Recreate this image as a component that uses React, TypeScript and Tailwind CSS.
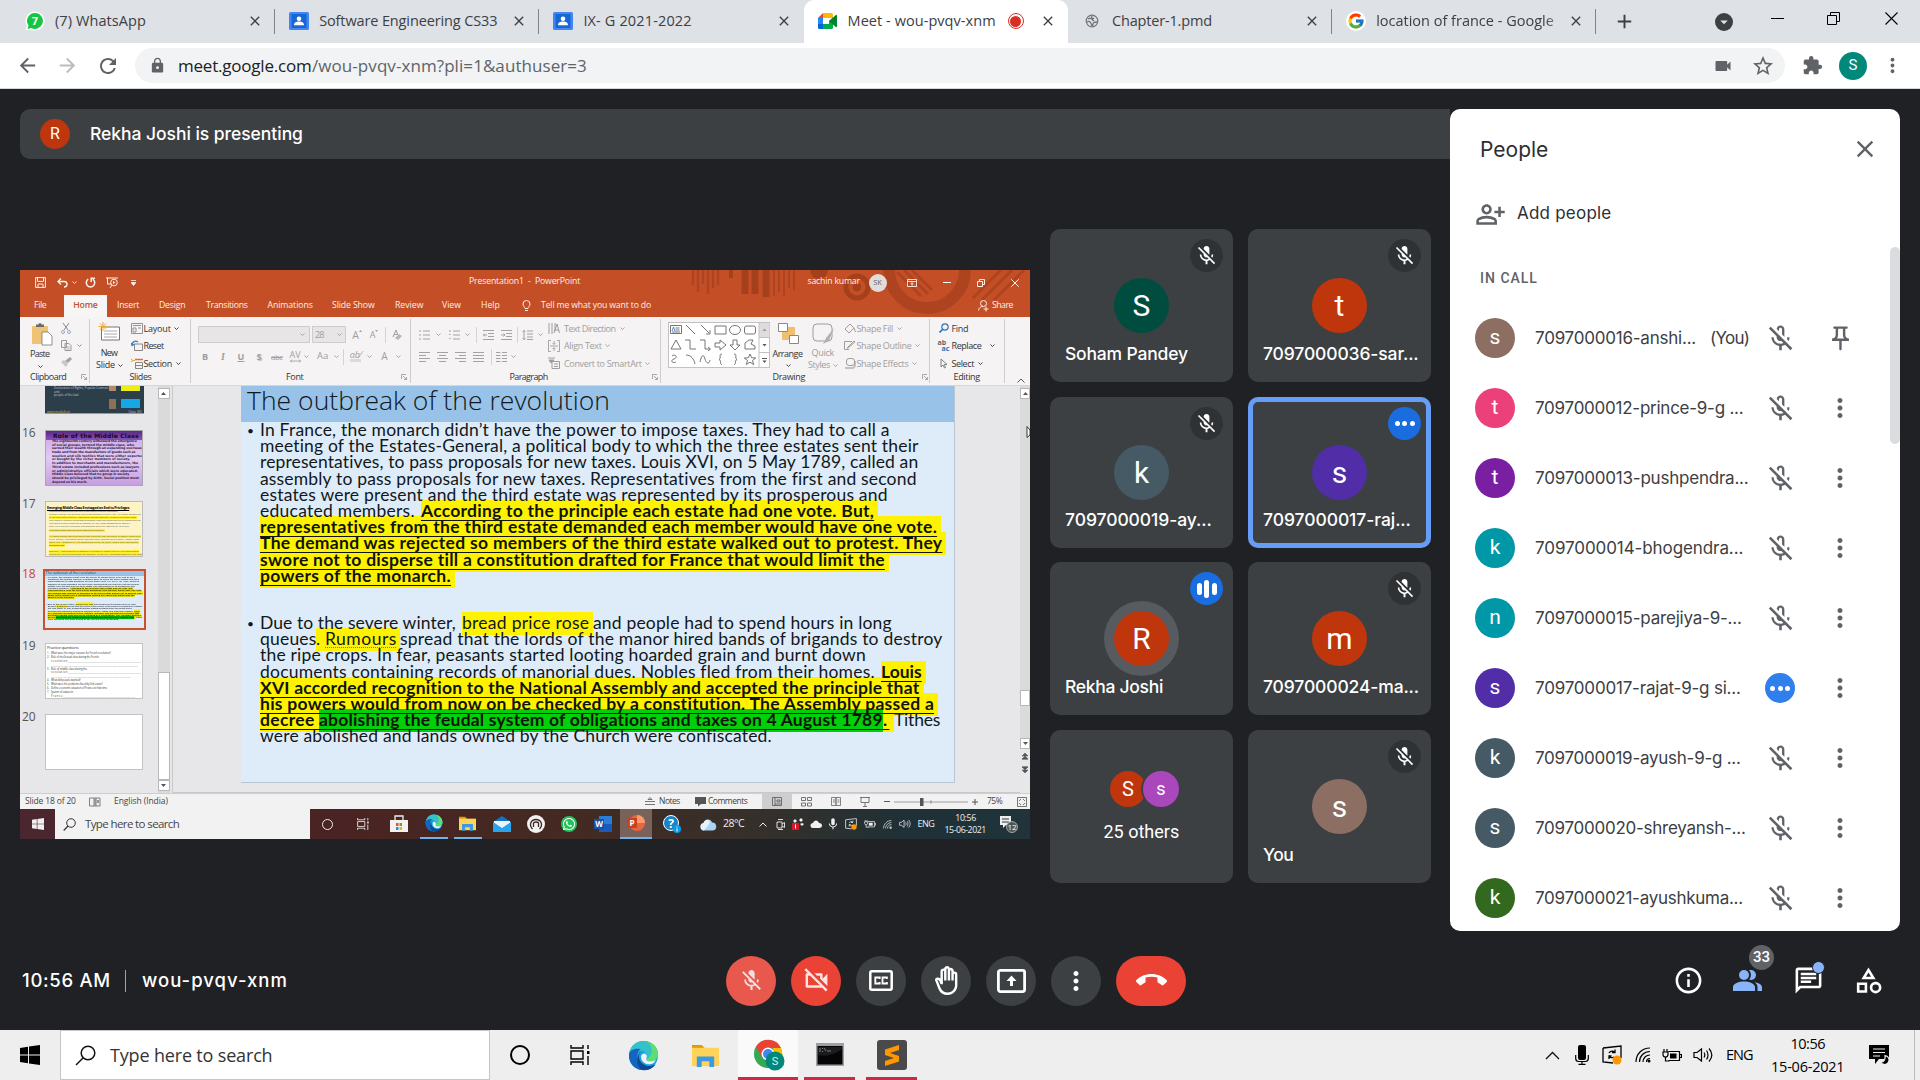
import React, { useLayoutEffect, useRef } from "react";
import {
  MdAdd, MdArrowBack, MdArrowForward, MdRefresh, MdLock, MdVideocam, MdStarOutline, MdExtension,
  MdMoreVert, MdClose, MdMicOff, MdOutlineMicOff, MdOutlineVideocamOff, MdOutlineBackHand,
  MdCallEnd, MdInfoOutline, MdOutlineChat, MdOutlineCategory, MdOutlinePersonAddAlt,
  MdOutlinePushPin, MdMic, MdArrowDropDown,
} from "react-icons/md";
import { FcGoogle } from "react-icons/fc";
import { FaWhatsapp } from "react-icons/fa";

/** Single line of text whose letter spacing is adjusted so that it fills `w` pixels. */
function Fit({ w, children, className = "" }: { w: number; children: string; className?: string }) {
  const ref = useRef<HTMLSpanElement>(null);
  useLayoutEffect(() => {
    const el = ref.current;
    if (!el) return;
    el.style.width = "auto";
    el.style.letterSpacing = "0px";
    const gap = (w - el.offsetWidth) / Math.max(1, children.length - 1);
    el.style.letterSpacing = `${gap}px`;
    el.style.width = `${w}px`;
  }, [w, children]);
  return (
    <span ref={ref} className={`inline-block shrink-0 whitespace-pre ${className}`}>
      {children}
    </span>
  );
}

function Svg({ w, h, vb, className = "", children }: { w: number; h: number; vb?: string; className?: string; children: React.ReactNode }) {
  return (
    <svg width={w} height={h} viewBox={vb ?? `0 0 ${w} ${h}`} fill="none" className={`shrink-0 ${className}`}>
      {children}
    </svg>
  );
}

function Cell({ className = "", children }: { className?: string; children?: React.ReactNode }) {
  return <div className={`flex shrink-0 items-center justify-center ${className}`}>{children}</div>;
}

/* ---------------------------------- Browser ---------------------------------- */

function ContactIcon() {
  return (
    <Svg w={20} h={18}>
      <rect width="20" height="18" rx="1.5" fill="#4285f4" />
      <rect x="2.5" y="2" width="15" height="14" fill="#1967d2" />
      <circle cx="10" cy="6.7" r="2.3" fill="#fff" />
      <path d="M5 13.2c0-2.6 2.3-3.6 5-3.6s5 1 5 3.6z" fill="#fff" />
    </Svg>
  );
}

function MeetIcon() {
  return (
    <Svg w={19} h={16}>
      <path d="M5 0v5H0z" fill="#ea4335" />
      <path d="M0 5h5v6H0z" fill="#2684fc" />
      <path d="M0 11h5v5H1.5A1.5 1.5 0 0 1 0 14.5z" fill="#0066da" />
      <path d="M5 0h8.5A1.5 1.5 0 0 1 15 1.5V5h-4v0H5z" fill="#ffba00" />
      <path d="M5 11h6V8l4-3v9.5a1.5 1.5 0 0 1-1.5 1.500H5z" fill="#00ac47" />
      <path d="M11 8l6.800-6c.5-.4 1.200 0 1.200.5v11c0 .5-.7.9-1.200.5z" fill="#00832d" />
    </Svg>
  );
}

const tabs = [
  { title: "(7) WhatsApp", w: 91, icon: "wa" },
  { title: "Software Engineering CS33", w: 178, icon: "contact" },
  { title: "IX- G 2021-2022", w: 108, icon: "contact" },
  { title: "Meet - wou-pvqv-xnm", w: 148, icon: "meet" },
  { title: "Chapter-1.pmd", w: 100, icon: "globe" },
  { title: "location of france - Google", w: 178, icon: "google" },
];

function TabIcon({ kind }: { kind: string }) {
  if (kind === "wa")
    return (
      <Svg w={20} h={20}>
        <path d="M10 0.500a9.500 9.500 0 1 1-4.700 17.700L.5 19.500l1.300-4.700A9.500 9.500 0 0 1 10 .5z" fill="#fff" />
        <path d="M10 2a8 8 0 1 1-4 15l-3.500 1 1-3.400A8 8 0 0 1 10 2z" fill="#14c643" />
        <text x="10" y="14" fontSize="11" fontWeight="700" fill="#fff" textAnchor="middle" fontFamily="Open Sans">7</text>
      </Svg>
    );
  if (kind === "contact") return <ContactIcon />;
  if (kind === "meet") return <MeetIcon />;
  if (kind === "google")
    return (
      <div className="flex size-5 items-center justify-center rounded-full bg-white">
        <FcGoogle size={18} />
      </div>
    );
  return (
    <Svg w={14} h={14}>
      <circle cx="7" cy="7" r="5.800" stroke="#70757a" strokeWidth="1.200" />
      <path d="M3 5c2-2 4 1 6-1M2 8c3-2 4 1 5 4M8 12c-1-3 1-4 4-4M7 2c-1 2 0 4 2 5" stroke="#70757a" strokeWidth="1.300" />
    </Svg>
  );
}

function TabStrip() {
  return (
    <div className="flex h-[43px] bg-[#dee1e6] pl-[11px] font-['Open_Sans',sans-serif] text-[14.500px] text-[#3c4043]">
      {tabs.map((t, i) => {
        const active = i === 3;
        return (
          <div
            key={t.title}
            className={
              active
                ? "relative flex h-full w-[264.400px] shrink-0 items-center rounded-t-[10px] bg-white px-3 pb-px"
                : "relative flex h-full w-[264.200px] shrink-0 items-center px-3 pb-px"
            }
          >
            <Cell className="w-6"><TabIcon kind={t.icon} /></Cell>
            <div className={i === 5 ? "ml-2 flex-1 overflow-hidden pb-px [mask-image:linear-gradient(to_right,black_88%,transparent)]" : "ml-2 flex-1 overflow-hidden pb-px"}>
              <Fit w={t.w} className="block">{t.title}</Fit>
            </div>
            {active && (
              <div className="mr-4 flex size-4 items-center justify-center rounded-full border-[1.500px] border-[#d93025]">
                <div className="size-[11px] rounded-full bg-[#d93025]" />
              </div>
            )}
            <MdClose size={16} className="shrink-0 text-[#3c4043]" />
            {i !== 3 && i !== 2 && <div className="absolute top-[9px] right-0 h-[25px] w-px bg-[#808488]" />}
          </div>
        );
      })}
      <Cell className="ml-3 h-full w-8 pb-px text-[#3c4043]"><MdAdd size={23} /></Cell>
      <div className="flex-1" />
      <Cell className="h-full w-[50px]">
        <div className="flex size-[18px] items-center justify-center rounded-full bg-[#3c4043] text-[#dee1e6]">
          <MdArrowDropDown size={18} />
        </div>
      </Cell>
      <Cell className="h-[37px] w-[56px]"><div className="h-px w-[13px] bg-black" /></Cell>
      <Cell className="h-[37px] w-[57px]">
        <Svg w={13} h={13}><path d="M.5 3.500h9v9h-9zM3.500 3V.5h9v9H10" stroke="#000" /></Svg>
      </Cell>
      <Cell className="h-[37px] w-[58px]">
        <Svg w={13} h={13}><path d="M.5.5l12 12M12.500.5l-12 12" stroke="#000" strokeWidth="1.100" /></Svg>
      </Cell>
    </div>
  );
}

function AddressBar() {
  return (
    <div className="flex h-[46px] items-center border-b border-[#d5d7da] bg-white pl-[7px] text-[#5f6368]">
      <Cell className="w-10"><MdArrowBack size={23} /></Cell>
      <Cell className="w-10 text-[#babcbe]"><MdArrowForward size={23} /></Cell>
      <Cell className="w-[42px]"><MdRefresh size={24} /></Cell>
      <div className="ml-[6px] flex h-[35px] w-[1650px] shrink-0 items-center rounded-full bg-[#f1f3f4] pl-[14px] font-['Open_Sans',sans-serif] text-[17px]">
        <MdLock size={17} />
        <Fit w={134} className="ml-3 text-[#202124]">meet.google.com</Fit>
        <Fit w={275}>/wou-pvqv-xnm?pli=1&authuser=3</Fit>
        <div className="flex-1" />
        <MdVideocam size={20} />
        <MdStarOutline size={24} className="mr-[10px] ml-[18px]" />
      </div>
      <MdExtension size={21} className="ml-[17px]" />
      <div className="ml-[16px] flex size-7 items-center justify-center rounded-full bg-[#00897b] font-['Roboto',sans-serif] text-[15px] text-white">S</div>
      <MdMoreVert size={23} className="ml-[14px]" />
    </div>
  );
}

/* ----------------------------------- Slide ----------------------------------- */

function Caret({ className = "" }: { className?: string }) {
  return (
    <Svg w={5} h={3} className={className}><path d="M.5.5l2 2 2-2" stroke="currentColor" strokeWidth=".9" /></Svg>
  );
}

type Part = { t: string; w: number; ml?: "s" | "m"; hl?: "y" | "g"; b?: boolean; typo?: boolean };

const para1: Part[][] = [
  [{ t: "In France, the monarch didn’t have the power to impose taxes. They had to call a", w: 630 }],
  [{ t: "meeting of the Estates-General, a political body to which the three estates sent their", w: 659 }],
  [{ t: "representatives, to pass proposals for new taxes. Louis XVI, on 5 May 1789, called an", w: 658 }],
  [{ t: "assembly to pass proposals for new taxes. Representatives from the first and second", w: 656 }],
  [{ t: "estates were present and the third estate was represented by its prosperous and", w: 628 }],
  [
    { t: "educated members.", w: 155 },
    { t: "According to the principle each estate had one vote. But,", w: 453, ml: "m", hl: "y", b: true },
  ],
  [{ t: "representatives from the third estate demanded each member would have one vote.", w: 677, hl: "y", b: true }],
  [{ t: "The demand was rejected so members of the third estate walked out to protest. They", w: 682, hl: "y", b: true }],
  [{ t: "swore not to disperse till a constitution drafted for France that would limit the", w: 625, hl: "y", b: true }],
  [{ t: "powers of the monarch.", w: 191, hl: "y", b: true }],
];

const para2: Part[][] = [
  [
    { t: "Due to the severe winter,", w: 196 },
    { t: "bread price rose", w: 127, ml: "m", hl: "y" },
    { t: "and people had to spend hours in long", w: 299, ml: "s" },
  ],
  [
    { t: "queues", w: 56 },
    { t: ". ", w: 9, hl: "y" },
    { t: "Rumours", w: 71, hl: "y", typo: true },
    { t: "spread that the lords of the manor hired bands of brigands to destroy", w: 542, ml: "s" },
  ],
  [{ t: "the ripe crops. In fear, peasants started looting hoarded grain and burnt down", w: 606 }],
  [
    { t: "documents containing records of manorial dues. Nobles fled from their homes.", w: 615 },
    { t: "Louis", w: 41, ml: "m", hl: "y", b: true },
  ],
  [{ t: "XVI accorded recognition to the National Assembly and accepted the principle that", w: 660, hl: "y", b: true }],
  [{ t: "his powers would from now on be checked by a constitution. The Assembly passed a", w: 674, hl: "y", b: true }],
  [
    { t: "decree ", w: 59, hl: "y", b: true },
    { t: "abolishing the feudal system of obligations and taxes on 4 August 1789", w: 564, hl: "g", b: true },
    { t: ". ", w: 7, hl: "y", b: true },
    { t: "Tithes", w: 46, ml: "s" },
  ],
  [{ t: "were abolished and lands owned by the Church were confiscated.", w: 511 }],
];

function SlideLine({ parts }: { parts: Part[] }) {
  return (
    <div className="flex h-[16.200px] items-center">
      {parts.map((p, i) => (
        <span key={i} className={p.ml === "m" ? "relative ml-[6px]" : p.ml === "s" ? "relative ml-[4px]" : "relative"}>
          {p.hl === "y" && <span className="absolute -top-[1px] -right-[4px] bottom-[-2px] left-0 -z-10 bg-[#fff200]" />}
          {p.hl === "g" && <span className="absolute -top-[1px] right-0 bottom-[-2px] left-0 -z-10 bg-[#00cf0a]" />}
          <Fit
            w={p.w}
            className={
              p.b
                ? "font-bold text-[#101408] underline decoration-[1.300px] underline-offset-[2.500px] [text-decoration-skip-ink:none]"
                : p.typo
                  ? "underline decoration-[#e8502a] decoration-dotted decoration-1 underline-offset-[2px] [text-decoration-skip-ink:none]"
                  : ""
            }
          >
            {p.t}
          </Fit>
        </span>
      ))}
    </div>
  );
}

function Slide() {
  return (
    <div className="isolate h-[396px] w-[713px] bg-[#deebf8] font-['Lato',sans-serif] text-[17.500px] leading-[20px] text-[#101820]">
      <div className="relative -z-20 flex h-[36px] items-center bg-[#98c2e8] pb-[9px] pl-[6px]">
        <Fit w={363} className="font-['Open_Sans',sans-serif] text-[26.500px] font-light">The outbreak of the revolution</Fit>
      </div>
      <div className="flex">
        <div className="w-[19px] pl-[6px] text-[12px] leading-[18px]">•</div>
        <div>{para1.map((l, i) => <SlideLine key={i} parts={l} />)}</div>
      </div>
      <div className="mt-[31px] flex">
        <div className="w-[19px] pl-[6px] text-[12px] leading-[18px]">•</div>
        <div>{para2.map((l, i) => <SlideLine key={i} parts={l} />)}</div>
      </div>
    </div>
  );
}

/* --------------------------------- PowerPoint --------------------------------- */

const menu: [string, number, string][] = [
  ["Insert", 22, "ml-[10px]"],
  ["Design", 27, "ml-[20px]"],
  ["Transitions", 42, "ml-[20px]"],
  ["Animations", 45.5, "ml-[19.500px]"],
  ["Slide Show", 43, "ml-[19px]"],
  ["Review", 28, "ml-[20px]"],
  ["View", 19, "ml-[19px]"],
  ["Help", 19, "ml-[20px]"],
];

function PptHeader() {
  return (
    <div className="relative h-[47px] overflow-hidden bg-[#c44f26] text-[8.700px] text-[#fdeee8]">
      <svg className="absolute inset-0" width="1010" height="47" fill="none" stroke="#a5401c">
        <path d="M673 0v15M678 0v22M683 0v14M688 0v24M693 0v18M698 0v15" strokeWidth="2.500" opacity=".7" />
        <path d="M711 0v8" strokeWidth="4" />
        <path d="M725 0v24M735 0v24M746 0v27" strokeWidth="7" />
        <path d="M754 0v26M759 0v22M764 0v26M769 0v18M774 0v20" strokeWidth="2" opacity=".7" />
        <path d="M790 0a9 9 0 0 0 18 0z" fill="#a5401c" stroke="none" />
        <circle cx="837" cy="17" r="11" strokeWidth="5" />
        <circle cx="837" cy="17" r="4" fill="#a5401c" />
        <circle cx="907" cy="0" r="38" strokeWidth="12" opacity=".7" />
        <path d="M877 2l24 24M884 0l24 24M892 0l20 20M953 28l28-28M962 30l30-30M974 30l30-30" strokeWidth="3" opacity=".7" />
      </svg>
      <div className="relative flex h-[25px] items-center">
        <Cell className="ml-[13px] w-[14px]">
          <Svg w={11} h={11}><path d="M.6.6h9.800v9.800H.6zM2.500.6v3.800h6V.6M3 10.400V7h5v3.400" stroke="currentColor" /></Svg>
        </Cell>
        <Cell className="ml-[8px] w-[14px]">
          <Svg w={11} h={10}><path d="M4 .5L1 3.500l3 3M1.500 3.500H7c4 0 4 5.500 0 5.500" stroke="currentColor" strokeWidth="1.400" /></Svg>
        </Cell>
        <Cell className="w-[10px]"><Caret /></Cell>
        <Cell className="ml-[4px] w-[14px]">
          <Svg w={11} h={11}><path d="M3.200 2.200a4.200 4.200 0 1 0 4.600 0M6.200 5V1.200H10" stroke="currentColor" strokeWidth="1.500" /></Svg>
        </Cell>
        <Cell className="ml-[8px] w-[14px]">
          <Svg w={13} h={12}><path d="M0 1h12M1.500 1v6H5M4 11l2-3" stroke="currentColor" /><circle cx="8" cy="5.500" r="3.300" stroke="currentColor" /><path d="M7 4l2.500 1.500L7 7z" fill="currentColor" /></Svg>
        </Cell>
        <Cell className="ml-[10px] w-[8px]"><Svg w={5} h={6}><path d="M0 .5h5M0 2.500h5L2.500 5.500z" stroke="currentColor" strokeWidth=".8" fill="currentColor" /></Svg></Cell>
        <Fit w={111} className="ml-[332px] pb-px">Presentation1  -  PowerPoint</Fit>
        <Fit w={53} className="ml-[227.500px] pb-px">sachin kumar</Fit>
        <Cell className="ml-[8px] size-[18px] rounded-full bg-[#e2ddda] text-[7.500px] text-[#666]">SK</Cell>
        <Cell className="ml-[17px] w-[16px]"><Svg w={10} h={8}><path d="M.5.5h9v7h-9zM.5 2.500h9M5 7V4M3.500 5L5 3.700 6.500 5" stroke="currentColor" strokeWidth=".9" /></Svg></Cell>
        <Cell className="ml-[19px] w-[16px]"><div className="h-px w-[8px] bg-white" /></Cell>
        <Cell className="ml-[18px] w-[16px]"><Svg w={8} h={8}><path d="M.5 2.500h5v5h-5zM2.500 2V.5h5v5H6" stroke="currentColor" /></Svg></Cell>
        <Cell className="ml-[18px] w-[16px]"><Svg w={8} h={8}><path d="M.3.3l7.400 7.400M7.700.3L.3 7.700" stroke="currentColor" /></Svg></Cell>
      </div>
      <div className="relative flex h-[22px] items-center">
        <Fit w={13} className="ml-[14px]">File</Fit>
        <Cell className="ml-[17px] h-full w-[43px] bg-[#f8f6f5] text-[#c4502a]"><Fit w={24.5} className="font-semibold">Home</Fit></Cell>
        {menu.map(([t, w, ml]) => <Fit key={t} w={w} className={ml}>{t}</Fit>)}
        <Cell className="ml-[21px] w-[10px]"><Svg w={9} h={12}><path d="M3 8.500C3 7 1 6.500 1 4a3.500 3.500 0 0 1 7 0c0 2.500-2 3-2 4.500zM3 10.500h3" stroke="currentColor" /></Svg></Cell>
        <Fit w={110} className="ml-[10px]">Tell me what you want to do</Fit>
        <Svg w={11} h={12} className="ml-[327px]"><circle cx="5.500" cy="3.500" r="3" stroke="currentColor" /><path d="M.5 10.500C1 7.500 3 6.500 5 6.500M8 6.500v5M5.500 9h5" stroke="currentColor" /></Svg>
        <Fit w={21} className="ml-[3px]">Share</Fit>
      </div>
    </div>
  );
}

function GroupLabel({ children, launcher, className }: { children: React.ReactNode; launcher?: string; className: string }) {
  return (
    <div className={`flex h-[13px] items-center ${className}`}>
      {children}
      {launcher && (
        <Svg w={6} h={6} className={launcher}><path d="M.5 5V.5H5M2 2l3.500 3.500M5.500 3v2.500H3" stroke="#888" strokeWidth=".7" /></Svg>
      )}
    </div>
  );
}

function VSep() {
  return <div className="h-[16px] w-px bg-[#d6d4d3]" />;
}

function Lines({ kind }: { kind: string }) {
  const d: Record<string, string> = {
    left: "M0 .5h11M0 3.500h7M0 6.500h11M0 9.500h7",
    center: "M0 .5h11M2 3.500h7M0 6.500h11M2 9.500h7",
    right: "M0 .5h11M4 3.500h7M0 6.500h11M4 9.500h7",
    just: "M0 .5h11M0 3.500h11M0 6.500h11M0 9.500h11",
    cols: "M0 .5h4.500M6 .5H11M0 3.500h4.500M6 3.500H11M0 6.500h4.500M6 6.500H11M0 9.500h4.500M6 9.500H11",
    bullets: "M0 1h2M4 1h7M0 5h2M4 5h7M0 9h2M4 9h7",
    numbers: "M1 0v2M0 4.500h1.500M0 8.500h1.500M4 1h7M4 5h7M4 9h7",
    outdent: "M0 .5h11M5 3.500h6M5 6.500h6M0 9.500h11M4 5H0M2 3.500L.5 5 2 6.500",
    indent: "M0 .5h11M5 3.500h6M5 6.500h6M0 9.500h11M0 5h4M2.500 3.500L4 5 2.500 6.500",
    spacing: "M5 1h6M5 4h6M5 7h6M5 9.500h6M2 0v10M.5 2L2 .5 3.500 2M.5 8L2 9.500 3.500 8",
  };
  return <Svg w={11} h={10}><path d={d[kind]} stroke="#a5a3a2" /></Svg>;
}

function RibbonRow({ icon, label, w, caret, iconCell = "w-[17px]" }: { icon: React.ReactNode; label: string; w: number; caret?: string; iconCell?: string }) {
  return (
    <div className="flex h-[17.500px] items-center pt-px">
      <Cell className={iconCell}>{icon}</Cell>
      <Fit w={w}>{label}</Fit>
      {caret && <Caret className={caret} />}
    </div>
  );
}

function Ribbon() {
  return (
    <div className="flex h-[69px] border-b border-[#d8d6d5] bg-[#f5f3f3] text-[9px] text-[#333]">
      {/* Clipboard */}
      <div className="my-[2px] w-[69.500px] shrink-0 border-r border-[#cfcdcc]">
        <div className="flex h-[54px]">
          <div className="flex w-[40px] flex-col items-center pt-[3px]">
            <Svg w={22} h={24} className="ml-[4px]">
              <path d="M1 4h16v18H1z" fill="#eec376" />
              <path d="M5 5V2.500h2.500a1.500 1.500 0 0 1 3 0H13V5z" fill="#6a6a6a" />
              <path d="M11 10h6l4 4v9H11z" fill="#fff" stroke="#777" strokeWidth=".8" />
            </Svg>
            <Fit w={20} className="leading-[16px]">Paste</Fit>
            <Caret className="mt-[3px]" />
          </div>
          <div className="pl-[1px] text-[#888]">
            <Cell className="h-[18px] w-[10px]"><Svg w={10} h={11}><path d="M2 0l5 7M8 0L3 7" stroke="#8b8b8b" /><circle cx="2" cy="9" r="1.500" stroke="#9aabc8" /><circle cx="8" cy="9" r="1.500" stroke="#9aabc8" /></Svg></Cell>
            <div className="flex h-[17px] items-center">
              <Svg w={11} h={11}><path d="M.5.5h5v7h-5zM4 3.500h4l2 2v5H4z" stroke="#9a9a9a" fill="#f5f3f3" /><path d="M5.500 7h3M5.500 9h3" stroke="#9a9a9a" strokeWidth=".7" /></Svg>
              <Caret className="ml-[5px]" />
            </div>
            <Cell className="h-[16px] w-[10px]"><Svg w={11} h={10}><path d="M0 5l3-2 4 4-2 3z" fill="#c9c5c2" /><path d="M4 4l5-4 2 2-4 4z" fill="#a3a1a0" /></Svg></Cell>
          </div>
        </div>
        <GroupLabel className="-mt-[3px] pl-[10px]" launcher="ml-[14px]"><Fit w={37}>Clipboard</Fit></GroupLabel>
      </div>
      {/* Slides */}
      <div className="my-[2px] w-[101.500px] shrink-0 border-r border-[#cfcdcc]">
        <div className="flex h-[54px]">
          <div className="flex w-[40px] flex-col items-center pt-[3px]">
            <Svg w={23} h={20}>
              <path d="M3.500 5h18v13h-18z" fill="#fff" stroke="#777" />
              <path d="M6 9h13M6 12h13M6 15h13" stroke="#aaa" />
              <path d="M5 0v9M.5 4.500h9M2 1.500l6 6M8 1.500l-6 6" stroke="#eca93c" />
            </Svg>
            <Fit w={17.5} className="mt-[5px] leading-[12px]">New</Fit>
            <div className="flex items-center leading-[12px]"><Fit w={19}>Slide</Fit><Caret className="ml-[3px]" /></div>
          </div>
          <div>
            <RibbonRow iconCell="w-[14px]" label="Layout" w={27} caret="ml-[3px]" icon={<Svg w={12} h={11}><path d="M.5.5h11v10H.5zM2 2.500h8M2 5h3v4H2zM7 5h3" stroke="#888" strokeWidth=".9" /></Svg>} />
            <RibbonRow iconCell="w-[14px]" label="Reset" w={20.5} icon={<Svg w={12} h={11}><path d="M3.500 4h8v6.500h-8z" stroke="#888" /><path d="M1 5c0-3 3-5 6-3M0 3l1 2.500L3.500 4" stroke="#3b7fc4" strokeWidth="1.200" /></Svg>} />
            <RibbonRow iconCell="w-[14px]" label="Section" w={29} caret="ml-[3px]" icon={<Svg w={12} h={11}><path d="M4 1.500h8" stroke="#d9742b" strokeWidth="1.500" /><path d="M4.500 4.500h7v6h-7zM4.500 7.500h7" stroke="#888" /><path d="M0 1l2 1.500L0 4M1 2.500h3" stroke="#eca93c" /></Svg>} />
          </div>
        </div>
        <GroupLabel className="-mt-[3px] pl-[40px]"><Fit w={22}>Slides</Fit></GroupLabel>
      </div>
      {/* Font */}
      <div className="my-[2px] w-[219.500px] shrink-0 border-r border-[#cfcdcc]">
        <div className="h-[54px] pt-[6px] text-[#a09e9d]">
          <div className="flex h-[19px] items-center pl-[7px]">
            <div className="flex h-[17px] w-[112px] items-center justify-end border border-[#cfcdcc] bg-[#e7e5e5] pr-[4px]"><Caret /></div>
            <div className="ml-[2px] flex h-[17px] w-[34px] items-center justify-between border border-[#cfcdcc] bg-[#e7e5e5] pr-[3px] pl-[2px]"><Fit w={9}>28</Fit><Caret /></div>
            <Cell className="w-[22px] text-[10.500px] leading-[12px]">A<Svg w={3} h={2} className="mb-[8px]"><path d="M0 2h3L1.500 0z" fill="currentColor" /></Svg></Cell>
            <Cell className="w-[12px] text-[9px] leading-[12px]">A<Svg w={3} h={2} className="mb-[8px]"><path d="M0 0h3L1.500 2z" fill="currentColor" /></Svg></Cell>
            <Cell className="w-[11px]"><VSep /></Cell>
            <Cell className="w-[13px]"><Svg w={11} h={12}><path d="M1 8L4 1l2 5M2 5.500h3" stroke="currentColor" /><path d="M3 9l4-4 3 2-4 4z" fill="#b9b7b6" /></Svg></Cell>
          </div>
          <div className="flex h-[25px] items-center pl-[5px]">
            <Cell className="w-[18px] font-bold">B</Cell>
            <Cell className="w-[18px] font-['Liberation_Serif',serif] text-[10px] font-bold italic">I</Cell>
            <Cell className="w-[18px] font-bold underline">U</Cell>
            <Cell className="w-[18px] font-bold [text-shadow:1px_1px_1px_#bbb]">S</Cell>
            <Cell className="w-[18px]"><Fit w={12} className="text-[8px] line-through">abc</Fit></Cell>
            <Cell className="w-[18px] flex-col leading-[8px]"><Fit w={11}>AV</Fit><Svg w={11} h={4}><path d="M0 2h11M2 .5L.5 2 2 3.500M9 .5L10.500 2 9 3.500" stroke="currentColor" strokeWidth=".8" /></Svg></Cell>
            <Cell className="w-[5px]"><Caret /></Cell>
            <Cell className="ml-[2px] w-[23px]"><Fit w={11} className="text-[9.500px]">Aa</Fit></Cell>
            <Cell className="w-[5px]"><Caret /></Cell>
            <Cell className="w-[9px]"><VSep /></Cell>
            <Cell className="w-[15px] flex-col leading-[8px]"><span className="italic">ab⁄</span><div className="h-[3px] w-[11px] bg-[#dddbda]" /></Cell>
            <Cell className="w-[13px]"><Caret /></Cell>
            <Cell className="w-[17px] text-[10px]">A</Cell>
            <Cell className="w-[10px]"><Caret /></Cell>
          </div>
        </div>
        <GroupLabel className="-mt-[3px] pl-[95px]" launcher="ml-[97px]"><Fit w={18}>Font</Fit></GroupLabel>
      </div>
      {/* Paragraph */}
      <div className="my-[2px] w-[250px] shrink-0 border-r border-[#cfcdcc]">
        <div className="flex h-[54px] text-[#a09e9d]">
          <div className="w-[133px] pt-[6px]">
            <div className="flex h-[19px] items-center pl-[3px]">
              <Cell className="w-[21px]"><Lines kind="bullets" /></Cell>
              <Cell className="w-[7px]"><Caret /></Cell>
              <Cell className="ml-[2px] w-[21px]"><Lines kind="numbers" /></Cell>
              <Cell className="w-[5px]"><Caret /></Cell>
              <Cell className="w-[13px]"><VSep /></Cell>
              <Cell className="w-[11px]"><Lines kind="outdent" /></Cell>
              <Cell className="ml-[3px] w-[19px]"><Lines kind="indent" /></Cell>
              <Cell className="w-[3px]"><VSep /></Cell>
              <Cell className="w-[18px]"><Lines kind="spacing" /></Cell>
              <Cell className="w-[7px]"><Caret /></Cell>
            </div>
            <div className="flex h-[25px] items-center pl-[5px]">
              <Cell className="w-[18px]"><Lines kind="left" /></Cell>
              <Cell className="w-[18px]"><Lines kind="center" /></Cell>
              <Cell className="w-[18px]"><Lines kind="right" /></Cell>
              <Cell className="w-[18px]"><Lines kind="just" /></Cell>
              <Cell className="w-[7px]"><VSep /></Cell>
              <Cell className="w-[13px]"><Lines kind="cols" /></Cell>
              <Cell className="w-[11px]"><Caret /></Cell>
            </div>
          </div>
          <div>
            <RibbonRow iconCell="w-[20.500px]" label="Text Direction" w={52.5} caret="ml-[3px]" icon={<Svg w={12} h={11}><path d="M1 0v11M4 0v11M7 0v8M6 10L9 1l2.500 9M7 7h4" stroke="currentColor" /></Svg>} />
            <RibbonRow iconCell="w-[20.500px]" label="Align Text" w={38} caret="ml-[3px]" icon={<Svg w={12} h={12}><path d="M3 .5H.5v11H3M9 .5h2.500v11H9M2 6h8M6 1v3M6 11V8M4.500 3L6 4.500 7.500 3M4.500 9L6 7.500 7.500 9" stroke="currentColor" strokeWidth=".9" /></Svg>} />
            <RibbonRow iconCell="w-[20.500px]" label="Convert to SmartArt" w={78} caret="ml-[3px]" icon={<Svg w={12} h={12}><path d="M0 1h7M1 3h5l-3 3z" stroke="currentColor" fill="currentColor" /><path d="M4 4.500h7.500v7H4zM6 7h4M6 9.500h4" stroke="currentColor" /></Svg>} />
          </div>
        </div>
        <GroupLabel className="-mt-[3px] pl-[99px]" launcher="ml-[103px]"><Fit w={39}>Paragraph</Fit></GroupLabel>
      </div>
      {/* Drawing */}
      <div className="my-[2px] w-[269px] shrink-0 border-r border-[#cfcdcc]">
        <div className="flex h-[54px]">
          <Svg w={102} h={46} className="mt-[3px] ml-[7px]">
            <rect x=".5" y=".5" width="101" height="45" fill="#fff" stroke="#c4c2c1" />
            <rect x="91" y="1" width="10.500" height="14" fill="#dedcdc" />
            <path d="M91 0v46M91 15.500h11M91 30.500h11" stroke="#c4c2c1" />
            <path d="M94.500 9l2-2.500 2 2.500z" fill="#999" />
            <path d="M94.500 22l2 2.500 2-2.500zM94.500 38.500l2 2.500 2-2.500z" fill="#555" />
            <path d="M94 36.500h5" stroke="#555" />
            <g stroke="#666" strokeWidth=".9">
              <path d="M2.500 3.500h11v8h-11zM7.500 6h4M7.500 8h4M4 10h8" />
              <path d="M4 9l1.500-4L7 9" stroke="#3b7fc4" />
              <path d="M18 3l9 9M33 3l8 8M42 8v4h-4M47 4h11v8H47z" />
              <ellipse cx="67" cy="8" rx="5.500" ry="4.500" />
              <rect x="76.500" y="4" width="11" height="8" rx="2" />
              <path d="M3 27l5-9 5 9zM17 18h5v9h6M32 18h5v9h5M40 25l2.500 2-2.500 2M47 21h5v-3l6 5-6 5v-3h-5zM65 18h4v5h3l-5 5-5-5h3zM77 27v-6l4-3h4l-2 4 4 2v3z" />
              <path d="M4 34c4-3 6 2 2 3s-2 5 2 3M18 33c5 0 8 4 9 9M32 40c2-9 4-7 5-3s4 6 5 1M54 32c-4 0 0 4-3 5.500 3 1 0 5 3 5M66 32c4 0 0 4 3 5.500-3 1 0 5-3 5M82 32l1.700 3.800 4 .2-3.200 2.500 1.200 4-3.700-2.300-3.700 2.300 1.200-4-3.200-2.500 4-.2z" />
            </g>
          </Svg>
          <div className="ml-[3px] flex w-[31px] flex-col items-center pt-[4px]">
            <Svg w={21} h={21}><path d="M9 4h8v8h-8zM4 9h8v8H4z" fill="#f0c070" /><path d="M.5.5h9v8h-9zM11.500 12.500h9v8h-9z" fill="#fff" stroke="#888" /></Svg>
            <Fit w={31} className="mt-[3px] leading-[14px]">Arrange</Fit>
            <Caret className="mt-[3px]" />
          </div>
          <div className="ml-[2px] flex w-[35px] flex-col items-center pt-[4px] text-[#a09e9d]">
            <Svg w={23} h={22}><rect x="1" y="1" width="19" height="17" rx="4" stroke="currentColor" /><path d="M22 5l-8 10-3 6 6-3z" fill="#b5b3b2" /></Svg>
            <Fit w={23} className="mt-[2px] leading-[12px]">Quick</Fit>
            <div className="flex items-center leading-[12px]"><Fit w={22}>Styles</Fit><Caret className="ml-[3px]" /></div>
          </div>
          <div className="pl-[2px] text-[#a09e9d]">
            <RibbonRow iconCell="w-[14px]" label="Shape Fill" w={37} caret="ml-[3px]" icon={<Svg w={12} h={11}><path d="M1 6l5-5 4 4-5 5zM10 5l1.500 4" stroke="currentColor" /></Svg>} />
            <RibbonRow iconCell="w-[14px]" label="Shape Outline" w={55} caret="ml-[3px]" icon={<Svg w={12} h={11}><path d="M8 1.500H.5v8H5M3 8l7-7 1 1-7 6z" stroke="currentColor" /></Svg>} />
            <RibbonRow iconCell="w-[14px]" label="Shape Effects" w={52} caret="ml-[3px]" icon={<Svg w={12} h={11}><path d="M1 10h8l2-2V3" stroke="#c4c2c1" strokeWidth="2" /><rect x="2.500" y=".5" width="8" height="7" rx="2.500" stroke="currentColor" /></Svg>} />
          </div>
        </div>
        <GroupLabel className="-mt-[3px] pl-[112px]" launcher="ml-[116px]"><Fit w={33}>Drawing</Fit></GroupLabel>
      </div>
      {/* Editing */}
      <div className="my-[2px] w-[75px] shrink-0 border-r border-[#cfcdcc]">
        <div className="h-[54px] pl-[6px]">
          <RibbonRow iconCell="w-[16px]" label="Find" w={17} icon={<Svg w={10} h={10}><circle cx="6" cy="4" r="3.200" stroke="#2f72b8" strokeWidth="1.200" /><path d="M4 6L.5 9.500" stroke="#2f72b8" strokeWidth="1.600" /></Svg>} />
          <RibbonRow iconCell="w-[16px]" label="Replace" w={30.5} caret="ml-[8px]" icon={<div className="text-[7px] leading-[6px] font-bold"><div className="text-[#666]">ab</div><div className="pl-1 text-[#2f72b8]">ac</div></div>} />
          <RibbonRow iconCell="w-[16px]" label="Select" w={23} caret="ml-[3px]" icon={<Svg w={8} h={11}><path d="M1 1v8l2-2 1.500 3 1-.5L4.300 6.500H7z" stroke="#777" strokeWidth=".9" /></Svg>} />
        </div>
        <GroupLabel className="-mt-[3px] pl-[24px]"><Fit w={27}>Editing</Fit></GroupLabel>
      </div>
      <div className="flex flex-1 items-end justify-center pb-[2px] pl-[8px]">
        <Svg w={8} h={5}><path d="M.5 4.500L4 1l3.500 3.500" stroke="#555" /></Svg>
      </div>
    </div>
  );
}

const middle = [
  "The eighteenth century witnessed the emergence",
  "of social groups, termed the middle class, who",
  "earned their wealth through an expanding overseas",
  "trade and from the manufacture of goods such as",
  "woollen and silk textiles that were either exported",
  "or bought by the richer members of society.",
  "In addition to merchants and manufacturers, the",
  "Third estate included professions such as lawyers",
  "or administrative officials which were educated.",
  "Middle Class believed that no group in society",
  "should be privileged by birth. Social position must",
  "depend on his merit.",
];
const middleW = [85, 82, 90, 83, 91, 78, 86, 87, 86, 77, 87, 35];

const privileges: [string, number, boolean][] = [
  ["Peasants and workers participated in revolts against taxes and food scarcity.", 70, false],
  ["Groups lacked the means and programmes to carry out full-scale measures", 92, false],
  ["In the eighteenth century, new social groups emerged, termed the middle class,", 88, true],
  ["their wealth through expanding overseas trade and manufacture of goods such as", 92, false],
  ["that were either exported or bought by the richer members of society.", 82, false],
  ["The third estate included professions such as lawyers or officials.", 80, false],
  ["a person’s social position must depend on his merit.", 56, true],
  [" ", 10, false],
  ["All these groups were educated and believed that no group in society should be", 92, true],
  ["birth. Rather, a person’s social position must depend on his merit. These ideas", 90, false],
  ["were put forward by philosophers such as John Locke and Rousseau.", 90, true],
  ["and opportunities.", 16, true],
  [" ", 10, false],
  ["Similarly, Montesquieu proposed a division of power within the government", 90, true],
  ["legislative, the executive and the judiciary. In the USA this model was put into force", 93, true],
];

const questions: [string, string, number][] = [
  ["1.", "What were the major reasons for French revolution?", 60],
  ["2.", "Role of intellectual class during the French", 48],
  ["", "revolution______________________________________________", 90],
  ["", "_______________________________________________________", 86],
  ["3.", "Role of middle class during the", 36],
  ["", "revolution______________________________________________", 90],
  ["", "________________________________________________", 80],
  ["4.", "What did people wanted?", 30],
  ["5.", "What were the problems faced by 3rd estate?", 52],
  ["6.", "Define economic situation of France at that time", 56],
  ["7.", "System of estates in", 22],
  ["", "France________________________________________", 84],
];

function Thumb({ n, active, className, children }: { n: string; active?: boolean; className: string; children?: React.ReactNode }) {
  return (
    <div className={`flex ${className}`}>
      <div className={active ? "-mt-[1px] w-[23px] pl-[2px] text-[12px] leading-[12px] text-[#d0452a]" : "-mt-[3px] w-[25px] pl-[2px] text-[12px] leading-[12px] text-[#555]"}>{n}</div>
      {children}
    </div>
  );
}

function Thumbnails() {
  return (
    <div className="h-[407px] w-[138px] shrink-0 overflow-hidden">
      <div className="ml-[25px] h-[28px] w-[98.500px] overflow-hidden border-b border-[#999] bg-[#2b3e4a] text-[3px] leading-[3.500px] text-[#ccd]">
        <div className="flex justify-between pl-[9px]">
          <div className="pt-px"><div>Declaration of Rights, Popular Contract and</div><div>people of the law’.</div></div>
          <div className="mr-[4px] flex gap-[5px]"><div className="h-[5px] w-[7px] bg-[#b08a6a]" /><div className="h-[5px] w-[19px] bg-[#ecec1a]" /></div>
        </div>
        <div className="mt-[1px] flex justify-end gap-[5px] pr-[4px]"><div className="h-[10px] w-[7px] bg-[#8d7058]" /><div className="h-[9px] w-[19px] bg-[#14a8e8]" /></div>
        <div className="mt-[2px] flex justify-between px-[2px]"><span className="text-[#d8b84a]">www.medialls.in</span><span>Class, XIII</span></div>
      </div>
      <Thumb n="16" className="mt-[16px]">
        <div className="h-[56px] w-[98px] overflow-hidden border border-[#aaa] bg-[linear-gradient(#c9a4e4,#e2cbf2,#c79fe0)] font-['DejaVu_Sans',sans-serif] font-bold text-[#33224a]">
          <div className="flex h-[9px] items-center bg-[linear-gradient(#5a2a85,#8a4fb8)] pl-[7px] leading-[9px]"><Fit w={86} className="text-[6px] text-[#160a22]">Role of the Middle Class</Fit></div>
          <div className="pl-[6px] text-[3.200px] leading-[3.700px]">{middle.map((l, i) => <div key={l} className="flex h-[3.700px]"><Fit w={middleW[i]}>{l}</Fit></div>)}</div>
        </div>
      </Thumb>
      <Thumb n="17" className="mt-[15px]">
        <div className="h-[56px] w-[98px] overflow-hidden border border-[#bbb] bg-[#fdf3c4] pt-[4px] pl-[1px] text-[2.500px] leading-[3px] text-[#554]">
          <div className="flex h-[4px]"><Fit w={82} className="text-[3.500px] leading-[3.500px] font-bold text-black underline">Emerging Middle Class Envisaged an End to Privileges</Fit></div>
          {privileges.map(([l, w, y], i) => (
            <div key={i} className="flex h-[3.100px] pl-[2px]"><Fit w={w} className={y ? "bg-[#ffee33]" : ""}>{l}</Fit></div>
          ))}
        </div>
      </Thumb>
      <Thumb n="18" active className="mt-[12px]">
        <div className="h-[61px] w-[103px] overflow-hidden border-2 border-[#c9512d]">
          <div className="origin-top-left scale-[0.139]"><Slide /></div>
        </div>
      </Thumb>
      <Thumb n="19" className="mt-[13px]">
        <div className="h-[56px] w-[98px] overflow-hidden border border-[#c4c2c4] bg-white pt-[1px] text-[2.600px] leading-[4px] text-[#333]">
          <div className="flex h-[6px] pl-[1px]"><Fit w={32} className="text-[4.200px] leading-[5px]">Practice questions</Fit></div>
          {questions.map(([n, q, w], i) => <div key={i} className="flex h-[3.900px] pl-[1px]"><span className="w-[4px]">{n}</span><Fit w={w}>{q}</Fit></div>)}
        </div>
      </Thumb>
      <Thumb n="20" className="mt-[15px]">
        <div className="h-[56px] w-[98px] border border-[#c4c2c4] bg-white" />
      </Thumb>
    </div>
  );
}

function ArrowBox({ down }: { down?: boolean }) {
  return (
    <div className="flex h-[11px] items-center justify-center border border-[#b9b7b8] bg-white">
      <Svg w={5} h={3}><path d={down ? "M0 0h5L2.500 3z" : "M0 3h5L2.500 0z"} fill="#555" /></Svg>
    </div>
  );
}

function PptBody() {
  return (
    <div className="flex h-[407px] overflow-hidden bg-[#e7e6e8] font-['Open_Sans',sans-serif]">
      <Thumbnails />
      <div className="flex w-[11.500px] flex-col bg-[#dbdadb] pt-[2px] pb-[2px]">
        <ArrowBox />
        <div className="flex-1" />
        <div className="h-[108px] border border-[#b9b7b8] bg-white" />
        <ArrowBox down />
      </div>
      <div className="ml-[2.500px] flex flex-1 border-l border-[#c9c8ca]">
        <div className="flex-1 border-b border-[#c9c8ca] pl-[68px]">
          <div className="w-[714px] border-r border-b border-[#bcc6d2]"><Slide /></div>
        </div>
        <div className="relative flex w-[10px] flex-col bg-[#dbdadb] pt-[2px]">
          <ArrowBox />
          <div className="mt-[291px] h-[16px] border border-[#b9b7b8] bg-white" />
          <div className="mt-[32px]"><ArrowBox down /></div>
          <div className="flex flex-1 flex-col items-center gap-[6px] bg-[#e7e6e8] pt-[4px]">
            <Svg w={6} h={7}><path d="M0 3l3-3 3 3zM0 6l3-3 3 3zM0 6.500h6" fill="#555" stroke="#555" strokeWidth=".5" /></Svg>
            <Svg w={6} h={7}><path d="M0 1l3 3 3-3zM0 4l3 3 3-3zM0 .5h6" fill="#555" stroke="#555" strokeWidth=".5" /></Svg>
          </div>
          <Svg w={4} h={13} className="absolute top-[40px] right-0"><path d="M1 .5v11l3-2.500V4z" fill="#fff" stroke="#333" /></Svg>
        </div>
      </div>
    </div>
  );
}

function PptStatus() {
  return (
    <div className="flex h-[16px] items-center border-t border-[#cfcdcf] bg-[#f3f2f2] text-[8.500px] text-[#444]">
      <Fit w={51} className="ml-[5px]">Slide 18 of 20</Fit>
      <Svg w={12} h={10} className="ml-[13px]"><path d="M.5 1H5v8H.5zM7 1h4v8H7zM6 0v10M8 3l2 3M10 3L8 6" stroke="#666" strokeWidth=".8" /></Svg>
      <Fit w={54} className="ml-[13px]">English (India)</Fit>
      <Svg w={10} h={9} className="ml-[477px]"><path d="M0 4.500h10M0 7.500h10M3 2.500h4L5 .5z" stroke="#666" strokeWidth=".9" /></Svg>
      <Fit w={21} className="ml-[4px]">Notes</Fit>
      <Svg w={11} h={10} className="ml-[15px]"><path d="M0 0h11v7H6L3 9.500V7H0z" fill="#555" /></Svg>
      <Fit w={39.5} className="ml-[2px]">Comments</Fit>
      <Cell className="ml-[14.500px] h-full w-[30px] bg-[#cfcecf]"><Svg w={10} h={9}><path d="M.5.5h9v8h-9zM3 .5v8M5 3h3v2H5zM3 7h6" stroke="#555" strokeWidth=".8" /></Svg></Cell>
      <Cell className="w-[29px]"><Svg w={11} h={10}><path d="M.5.5h4v3h-4zM6.500.5h4v3h-4zM.5 6h4v3h-4zM6.500 6h4v3h-4z" stroke="#666" strokeWidth=".9" /></Svg></Cell>
      <Cell className="w-[29px]"><Svg w={10} h={9}><path d="M.5.5H5v8H.5zM5 .5h4.500v8H5zM2 3h2M2 5h2M6.500 3h2M6.500 5h2" stroke="#666" strokeWidth=".8" /></Svg></Cell>
      <Cell className="w-[29px]"><Svg w={10} h={10}><path d="M0 .5h10M1 .5v5h8v-5M5 6v3M3 9.500h4" stroke="#666" strokeWidth=".9" /></Svg></Cell>
      <div className="ml-[5px] h-px w-[6px] bg-[#555]" />
      <Svg w={74} h={10} className="ml-[4px]"><path d="M0 5h74M37 3v4" stroke="#888" strokeWidth=".8" /><rect x="26" y="1" width="3.500" height="8" fill="#555" /></Svg>
      <Svg w={6} h={6} className="ml-[4px]"><path d="M0 3h6M3 0v6" stroke="#555" /></Svg>
      <Fit w={16} className="ml-[9px]">75%</Fit>
      <Svg w={10} h={10} className="ml-[14px]"><path d="M.5.5h9v9h-9zM2 4l2-2M6 2l2 2M2 6l2 2M8 6L6 8" stroke="#555" strokeWidth=".8" /></Svg>
    </div>
  );
}

function Edge({ size }: { size: number }) {
  return (
    <Svg w={size} h={size} vb="0 0 32 32">
      <circle cx="16" cy="16" r="15" fill="#1b9de2" />
      <path d="M1.500 13C4 3 12 0 19 1.300 27 3 31 9 31 15c0 4-3 7-8 7-3 0-5-1-4-3 2-4-1-8-6-8-5 0-9 3-11.500 2z" fill="#35c1c9" />
      <path d="M20 1.500C27 3 31 9 31 15c0 4-3 7-8 7-2 0-4-.5-4-2 6-3 8-12 1-18.500z" fill="#5fdc74" />
      <path d="M1 16C1 10 8 8 13 9.500 8 12 8 22 15 26c5 2.500 10 1 13-1-5 7-14 8-20 4C3 26 1 21 1 16z" fill="#1366bd" />
      <path d="M14 11c-5 4-3 13 5 15.500 4 1 7 0 9.500-1.500C25 30 20 31.500 15 31 9 28 7 17 14 11z" fill="#0c4a93" />
      <path d="M13.500 16.500c.5-2 2-3 4-2.500 2 1 2.500 3 1.500 5-.7 2 1 3 4 3 2 0 4-.4 5.500-1.300C27 25 23 25.500 20 25c-4-.7-7-4.500-6.500-8.500z" fill="#e9f4fb" />
    </Svg>
  );
}

function Folder({ size }: { size: number }) {
  return (
    <Svg w={size} h={size} vb="0 0 28 26">
      <path d="M0 2h10l3 3v4H0z" fill="#dd9d00" />
      <path d="M0 5h28v19H0z" fill="#ffd25a" />
      <path d="M5 14h18v11h-5v-6h-8v6H5z" fill="#3c9be0" />
    </Svg>
  );
}

function WinLogo({ size, className = "" }: { size: number; className?: string }) {
  return (
    <Svg w={size} h={size} vb="0 0 20 20" className={className}>
      <path d="M0 3l8-1.200V9.500H0zM9 1.600L20 0v9.500H9zM0 10.500h8v7.700L0 17zM9 10.500h11V20L9 18.400z" fill="currentColor" />
    </Svg>
  );
}

function TaskView({ size }: { size: number }) {
  return (
    <Svg w={size} h={size} vb="0 0 20 20">
      <path d="M1 0v3h12V0M1 20v-3h12v3M1 6h12v8H1zM18 0v4M18 11v9" stroke="currentColor" strokeWidth="1.400" />
      <path d="M17 6h2.500v3H17z" fill="currentColor" />
    </Svg>
  );
}

function Wifi({ size }: { size: number }) {
  return (
    <Svg w={size} h={size} vb="0 0 16 16">
      <path d="M1 15C1 7 7 1 15 1M4.500 15C4.500 9 9 4.500 15 4.500M8 15c0-4 3-7 7-7M11.500 15c0-2 1.500-3.500 3.500-3.500" stroke="currentColor" strokeWidth="1.200" />
      <circle cx="14" cy="14" r="1.500" fill="currentColor" />
    </Svg>
  );
}

function Volume({ size }: { size: number }) {
  return (
    <Svg w={size} h={size * 0.8} vb="0 0 20 16">
      <path d="M1 5.500h3L8.500 2v12L4 10.500H1zM11 5.500c1 1.500 1 3.500 0 5M13.500 3.500c2 2.500 2 6.500 0 9M16 1.500c3.500 4 3.500 9 0 13" stroke="currentColor" strokeWidth="1.200" />
    </Svg>
  );
}

function Battery({ size }: { size: number }) {
  return (
    <Svg w={size} h={size * 0.65} vb="0 0 20 13">
      <path d="M6.500 2.500h11v9h-11M18 5.500h1.500v3H18M2 0v3M5 0v3M1 3h5v2.500a2.500 2.500 0 0 1-5 0zM3.500 8v4h4" stroke="currentColor" strokeWidth="1.200" />
      <path d="M8 4.500h6.500v5H8z" fill="currentColor" />
    </Svg>
  );
}

function SyncTray({ size }: { size: number }) {
  return (
    <Svg w={size} h={size} vb="0 0 20 20">
      <path d="M1 3l18-2v12M1 3v14l10 1M13 7.500A3.500 3.500 0 0 0 7 8M13 4.500v3h-3M7 11a3.500 3.500 0 0 0 5 1M7 14v-3h2.500" stroke="currentColor" strokeWidth="1.300" />
      <circle cx="15" cy="15" r="4.500" fill="#ff9500" />
    </Svg>
  );
}

function SharedTaskbar() {
  return (
    <div className="flex h-[30px] items-stretch bg-[linear-gradient(to_right,#4a2730,#4a2323_30%,#432a22_55%,#33302c_75%,#1f3037_88%,#20343a)] text-[9px] text-[#f0eeee]">
      <Cell className="w-[35px]"><WinLogo size={12} /></Cell>
      <div className="flex w-[255px] items-center bg-[#f3f2f3] pl-[8px] text-[#444]">
        <Svg w={13} h={13}><circle cx="8" cy="5" r="4.300" stroke="#333" /><path d="M5 8L.7 12.500" stroke="#333" strokeWidth="1.200" /></Svg>
        <Fit w={95} className="ml-[9px] text-[11.500px]">Type here to search</Fit>
      </div>
      <Cell className="w-[34px]"><div className="size-[11px] rounded-full border-[1.500px] border-[#eee]" /></Cell>
      <Cell className="w-[38px]"><TaskView size={12} /></Cell>
      <Cell className="w-[34px]">
        <Svg w={18} h={18}><path d="M5 5V1h8v4" stroke="#eee" strokeWidth="1.300" /><path d="M0 5h18v12H0z" fill="#f4f2f0" /><path d="M6 8h2.500v3H6z" fill="#e2542a" /><path d="M9.500 8H12v3H9.500z" fill="#69a52c" /><path d="M6 12h2.500v3H6z" fill="#2a93d8" /><path d="M9.500 12H12v3H9.500z" fill="#edb21c" /></Svg>
      </Cell>
      <Cell className="w-[35px]"><div className="flex h-full w-[28px] items-center justify-center border-b-2 border-[#6fb3e8]"><Edge size={18} /></div></Cell>
      <Cell className="w-[33px]"><div className="flex h-full w-[28px] items-center justify-center border-b-2 border-[#6fb3e8]"><Folder size={17} /></div></Cell>
      <Cell className="w-[36px]"><Svg w={18} h={16}><path d="M0 6l9-6 9 6v10H0z" fill="#1272c4" /><path d="M1 5h16v2l-8 6-8-6z" fill="#e8f3fb" /><path d="M0 6l9 6 9-6v10H0z" fill="#2aa3e8" /></Svg></Cell>
      <Cell className="w-[32px]"><Svg w={18} h={18}><circle cx="9" cy="9" r="9" fill="#f2f0f0" /><path d="M5.500 14c-4-4-1.500-9.500 3.500-9.500s7.500 5.500 3.500 9.500M6.500 12V8.500c0-2 5-2 5 0V12" stroke="#3a2a28" strokeWidth="1.300" /></Svg></Cell>
      <Cell className="w-[34px]"><div className="flex size-[16px] items-center justify-center rounded-full bg-[#25c25a] text-white"><FaWhatsapp size={14} /></div></Cell>
      <Cell className="w-[33px]"><Svg w={18} h={16}><path d="M5 0h13v16H5z" fill="#2b7cd3" /><path d="M5 8h13v8H5z" fill="#185abd" /><rect y="3" width="10" height="10" fill="#1b50a8" /><text x="5" y="11" fontSize="8" fontWeight="700" textAnchor="middle" fill="#fff" fontFamily="Open Sans">W</text></Svg></Cell>
      <Cell className="ml-px w-[32px] border-b-2 border-[#6fb3e8] bg-[#7a625c]"><Svg w={18} h={16}><circle cx="10" cy="8" r="8" fill="#e8663c" /><path d="M10 0a8 8 0 0 1 8 8h-8z" fill="#ff9a70" /><rect y="3" width="10" height="10" fill="#c9421f" /><text x="5" y="11" fontSize="8" fontWeight="700" textAnchor="middle" fill="#fff" fontFamily="Open Sans">P</text></Svg></Cell>
      <Cell className="w-[39px]"><Svg w={18} h={18}><circle cx="8" cy="8" r="7.500" fill="#1584c8" stroke="#fff" /><text x="8" y="12.500" fontSize="12" fontWeight="700" textAnchor="middle" fill="#fff" fontFamily="Open Sans">?</text><circle cx="14" cy="14" r="4" fill="#0a9be8" /><path d="M14 11.500v1M14 13.500v3" stroke="#fff" /></Svg></Cell>
      <Cell className="w-[32px] pl-[3px]"><Svg w={17} h={13}><path d="M4 12.500a3.800 3.800 0 0 1-.5-7.500C5 0 11 .5 12 4.500c5-.5 6 7.500 1 8z" fill="#a9d4f5" /><path d="M4 12.500a3.800 3.800 0 0 1-.5-7.500C5 1 9 1 10 4c-2 4-3 5-6 8.500z" fill="#e4f2fd" /></Svg></Cell>
      <Cell><Fit w={21.5} className="text-[10.500px]">28°C</Fit></Cell>
      <Cell className="ml-[8px] w-[20px]"><Svg w={8} h={5}><path d="M.5 4.500L4 1l3.500 3.500" stroke="currentColor" /></Svg></Cell>
      <Cell className="w-[16px]"><Svg w={9} h={11}><path d="M1 3h5v6H1zM6 5l2.500-1.500v5L6 7M2 .5h5M2 10.500h5" stroke="currentColor" strokeWidth=".9" /></Svg></Cell>
      <Cell className="w-[18px]"><Svg w={12} h={12}><path d="M1 3l2-2 2 2-2 2zM7 2l2-2 2 2-2 2zM8 6l2-1 2 1-2 2z" fill="#f3f0f0" /><rect y="5" width="7" height="7" fill="#d8182a" /><path d="M3.500 6.500v4" stroke="#fff" /></Svg></Cell>
      <Cell className="w-[18px]"><Svg w={12} h={8}><path d="M3 8a2.500 2.500 0 0 1 0-5C4-.5 8-.5 9 3c4 0 4 5 0 5z" fill="#f3f0f0" /></Svg></Cell>
      <Cell className="w-[17px]"><MdMic size={14} /></Cell>
      <Cell className="w-[19px]"><SyncTray size={12} /></Cell>
      <Cell className="w-[18px]"><Battery size={12} /></Cell>
      <Cell className="w-[18px]"><Wifi size={9} /></Cell>
      <Cell className="w-[16px]"><Volume size={12} /></Cell>
      <Cell className="ml-[5px]"><Fit w={17}>ENG</Fit></Cell>
      <div className="ml-[10px] flex w-[42px] flex-col items-center justify-center text-[8.800px] leading-[12.500px]">
        <Fit w={20.5}>10:56</Fit>
        <Fit w={42}>15-06-2021</Fit>
      </div>
      <Cell className="ml-[12px] w-[20px]">
        <Svg w={19} h={18}><path d="M1 1h11v9H7l-3 3v-3H1z" fill="#f0eeee" /><path d="M3 4h7M3 7h7" stroke="#20343a" /><circle cx="13" cy="12" r="5.500" fill="#4a5a60" stroke="#bbb" strokeWidth=".8" /><text x="13" y="15" fontSize="8" textAnchor="middle" fill="#fff" fontFamily="Open Sans">12</text></Svg>
      </Cell>
    </div>
  );
}

function Presentation() {
  return (
    <div className="h-[569px] w-[1010px] shrink-0 overflow-hidden bg-[#e7e6e8] font-['Open_Sans',sans-serif]">
      <PptHeader />
      <Ribbon />
      <PptBody />
      <PptStatus />
      <SharedTaskbar />
    </div>
  );
}

/* ------------------------------------ Meet ------------------------------------ */

function MicBadge() {
  return (
    <div className="absolute top-[10px] right-[10px] flex size-[33px] items-center justify-center rounded-full bg-[#2f3235] text-white">
      <MdMicOff size={23} />
    </div>
  );
}

function Dots({ className }: { className: string }) {
  return (
    <div className={`flex items-center justify-center gap-[2.500px] rounded-full ${className}`}>
      <div className="size-[5px] rounded-full bg-white" />
      <div className="size-[5px] rounded-full bg-white" />
      <div className="size-[5px] rounded-full bg-white" />
    </div>
  );
}

type TileData = { name: string; w: number; letter: string; color: string; state?: "typing" | "talking" };

const tiles: TileData[] = [
  { name: "Soham Pandey", w: 123, letter: "S", color: "bg-[#004d40]" },
  { name: "7097000036-sar...", w: 156, letter: "t", color: "bg-[#bf360c]" },
  { name: "7097000019-ay...", w: 147, letter: "k", color: "bg-[#455a64]" },
  { name: "7097000017-raj...", w: 148, letter: "s", color: "bg-[#512da8]", state: "typing" },
  { name: "Rekha Joshi", w: 98, letter: "R", color: "bg-[#bf360c]", state: "talking" },
  { name: "7097000024-ma...", w: 156, letter: "m", color: "bg-[#bf360c]" },
];

function Tile({ t }: { t: TileData }) {
  return (
    <div className={t.state === "typing" ? "relative flex items-center justify-center rounded-[10px] bg-[#3c4043] ring-[5px] ring-[#669df6] ring-inset" : "relative flex items-center justify-center rounded-[10px] bg-[#3c4043]"}>
      {t.state === "talking" && <div className="absolute top-[39px] left-[54px] size-[75px] rounded-full bg-[#575a5e]" />}
      <div className={`relative flex size-[55px] items-center justify-center rounded-full font-['Roboto',sans-serif] text-[30px] font-normal text-white ${t.color}`}>{t.letter}</div>
      {t.state === "typing" && <Dots className="absolute top-[10px] right-[10px] size-[33px] bg-[#1a6dde]" />}
      {t.state === "talking" && (
        <div className="absolute top-[10px] right-[10px] flex size-[33px] items-center justify-center gap-[2.500px] rounded-full bg-[#1a6dde]">
          <div className="h-[12px] w-[5px] rounded-full bg-white" />
          <div className="h-[18px] w-[5px] rounded-full bg-white" />
          <div className="h-[12px] w-[5px] rounded-full bg-white" />
        </div>
      )}
      {!t.state && <MicBadge />}
      <div className="absolute bottom-[16px] left-[15px] leading-[24px] text-white"><Fit w={t.w}>{t.name}</Fit></div>
    </div>
  );
}

function Participants() {
  return (
    <div className="grid h-[654px] grid-cols-[183px_183px] grid-rows-[153px_151px_153px_153px] gap-x-[15px] gap-y-[14.600px] font-['Inter',sans-serif] text-[17.500px] font-medium">
      {tiles.map((t) => <Tile key={t.name} t={t} />)}
      <div className="flex flex-col items-center rounded-[10px] bg-[#3c4043] pt-[41px] font-['Roboto',sans-serif] text-white">
        <div className="flex pl-[6px]">
          <div className="flex size-9 items-center justify-center rounded-full bg-[#bf360c] text-[20px] font-normal">S</div>
          <div className="-ml-[5px] h-9 rounded-full bg-[#3c4043] pl-[2px]">
            <div className="flex size-9 items-center justify-center rounded-full bg-[#ab47bc] text-[18px] font-normal">s</div>
          </div>
        </div>
        <Fit w={76} className="mt-[11px] text-[18px] font-normal">25 others</Fit>
      </div>
      <Tile t={{ name: "You", w: 31, letter: "s", color: "bg-[#8d6e63]" }} />
    </div>
  );
}

const people: [string, number, string, string][] = [
  ["7097000016-anshi...", 161, "s", "bg-[#8d6e63]"],
  ["7097000012-prince-9-g ...", 209, "t", "bg-[#ec407a]"],
  ["7097000013-pushpendra...", 214, "t", "bg-[#7b1fa2]"],
  ["7097000014-bhogendra...", 208, "k", "bg-[#0097a7]"],
  ["7097000015-parejiya-9-...", 207, "n", "bg-[#0097a7]"],
  ["7097000017-rajat-9-g si...", 206, "s", "bg-[#512da8]"],
  ["7097000019-ayush-9-g ...", 206, "k", "bg-[#455a64]"],
  ["7097000020-shreyansh-...", 211, "s", "bg-[#455a64]"],
  ["7097000021-ayushkuma...", 208, "k", "bg-[#33691e]"],
];

function PeoplePanel() {
  return (
    <div className="relative flex h-[822px] w-[450px] shrink-0 flex-col overflow-hidden rounded-[10px] bg-white font-['Inter',sans-serif] text-[#2d2f33]">
      <div className="flex h-[80px] shrink-0 items-center justify-between pr-[21px] pl-[30px]">
        <Fit w={68} className="pt-px text-[21px]">People</Fit>
        <MdClose size={28} className="text-[#5f6368]" />
      </div>
      <div className="flex h-[48px] shrink-0 items-center pt-[2px] pl-[25px]">
        <MdOutlinePersonAddAlt size={31} className="text-[#5f6368]" />
        <Fit w={94} className="ml-[11px] text-[17px]">Add people</Fit>
      </div>
      <div className="flex h-[66px] shrink-0 items-center pt-[16px] pl-[30px]">
        <Fit w={57} className="font-['Roboto',sans-serif] text-[14px] font-medium text-[#5f6368]">IN CALL</Fit>
      </div>
      {people.map(([name, w, letter, color], i) => (
        <div key={name} className="flex h-[70px] shrink-0 items-center pl-[25px]">
          <div className={`flex size-10 items-center justify-center rounded-full font-['Roboto',sans-serif] text-[21px] text-white ${color}`}>{letter}</div>
          <div className="ml-5 flex w-[220px] pt-[2px] text-[17px] text-[#3c4043]">
            <Fit w={w}>{name}</Fit>
            {i === 0 && <Fit w={40} className="ml-[14px]">(You)</Fit>}
          </div>
          <Cell className="w-[50px] text-[#5f6368]">
            {i === 5 ? <Dots className="size-[30px] bg-[#2f80ed]" /> : <MdOutlineMicOff size={31} />}
          </Cell>
          <Cell className="ml-[10px] w-[50px] text-[#5f6368]">
            {i === 0 ? <MdOutlinePushPin size={29} /> : <MdMoreVert size={30} />}
          </Cell>
        </div>
      ))}
      <div className="absolute top-[138px] right-0 h-[197px] w-[10px] rounded-full bg-[#dadce0]" />
    </div>
  );
}

function RoundButton({ children, className = "bg-[#3c4043]" }: { children: React.ReactNode; className?: string }) {
  return <div className={`flex size-[50px] items-center justify-center rounded-full ${className}`}>{children}</div>;
}

function CallControls() {
  return (
    <div className="flex h-[99px] items-center font-['Inter',sans-serif] text-[18.500px] font-medium text-white">
      <div className="flex w-[726px] items-center pl-[22px]">
        <Fit w={88} className="pt-px">10:56 AM</Fit>
        <div className="ml-[15px] h-[22px] w-px bg-[#a0a3a7]" />
        <Fit w={145} className="ml-[16px]">wou-pvqv-xnm</Fit>
      </div>
      <div className="flex gap-[15px]">
        <RoundButton className="bg-[#e9584c] text-[#f3e0de]"><MdMicOff size={25} /></RoundButton>
        <RoundButton className="bg-[#ea4335] text-[#fbe5e2]"><MdOutlineVideocamOff size={29} /></RoundButton>
        <RoundButton>
          <Svg w={24} h={21}><rect x="1.300" y="1.300" width="21.400" height="18.400" rx="1.500" stroke="#fff" strokeWidth="2.500" /><path d="M10.700 9V7.500H6.300v6h4.400V12M17.900 9V7.500h-4.400v6h4.400V12" stroke="#fff" strokeWidth="1.800" /></Svg>
        </RoundButton>
        <RoundButton><MdOutlineBackHand size={29} /></RoundButton>
        <RoundButton>
          <Svg w={29} h={24}><rect x="1.400" y="1.400" width="26.200" height="21.200" rx="2" stroke="#fff" strokeWidth="2.800" /><path d="M14.500 6.500l5 5.500H16v5h-3v-5H9.500z" fill="#fff" /></Svg>
        </RoundButton>
        <RoundButton><MdMoreVert size={30} /></RoundButton>
        <div className="flex h-[50px] w-[70px] items-center justify-center rounded-full bg-[#ea4335]"><MdCallEnd size={31} /></div>
      </div>
      <div className="flex-1" />
      <div className="flex pr-[22px]">
        <Cell className="w-[60px]"><MdInfoOutline size={31} /></Cell>
        <Cell className="relative w-[60px]">
          <Svg w={30} h={21} className="text-[#8ab4f8]">
            <circle cx="11" cy="5" r="5" fill="currentColor" />
            <path d="M0 21v-4c0-3.500 6-5.500 11-5.500S22 13.500 22 17v4zM16 9.500c2.500-2 2.500-7 0-9.200 4-1.300 7 1.500 7 4.700s-3 5.900-7 4.500zM24.500 21v-4c0-2-1.200-3.700-2.700-4.800 4 .8 7.200 2.500 7.200 4.800v4z" fill="currentColor" />
          </Svg>
          <div className="absolute -top-[20px] left-[31px] flex size-[25px] items-center justify-center rounded-full bg-[#5f6368] font-['Roboto',sans-serif] text-[15px]">33</div>
        </Cell>
        <Cell className="relative w-[60px]">
          <MdOutlineChat size={31} />
          <div className="absolute -top-[4px] left-[34px] size-[13px] rounded-full border border-[#202124] bg-[#8ab4f8]" />
        </Cell>
        <Cell className="w-[60px]"><MdOutlineCategory size={31} /></Cell>
      </div>
    </div>
  );
}

function Meet() {
  return (
    <div className="flex h-[941px] flex-col bg-[#202124]">
      <div className="flex h-[842px] pt-[20px] pl-[20px]">
        <div className="w-[1430px] shrink-0">
          <div className="flex h-[50px] items-center rounded-l-[10px] bg-[#3c4043] pl-[20px] font-['Inter',sans-serif] text-[17.500px] font-medium text-white">
            <div className="flex size-[30px] items-center justify-center rounded-full bg-[#bf360c] font-['Roboto',sans-serif] text-[16px] font-normal">R</div>
            <Fit w={213} className="ml-[20px]">Rekha Joshi is presenting</Fit>
          </div>
          <div className="flex">
            <div className="pt-[111px]"><Presentation /></div>
            <div className="ml-[20px] pt-[70px]"><Participants /></div>
          </div>
        </div>
        <PeoplePanel />
      </div>
      <CallControls />
    </div>
  );
}

/* ----------------------------------- Taskbar ---------------------------------- */

function Taskbar() {
  return (
    <div className="flex h-[50px] items-stretch bg-[#eeeeee] font-['Open_Sans',sans-serif] text-black">
      <Cell className="w-[60px]"><WinLogo size={20} /></Cell>
      <div className="flex w-[430px] items-center border border-[#c6c6c6] bg-white pl-[14px]">
        <Svg w={21} h={21}><circle cx="13" cy="8" r="6.800" stroke="#111" strokeWidth="1.500" /><path d="M8.500 12.500L1 20" stroke="#111" strokeWidth="1.500" /></Svg>
        <Fit w={163} className="ml-[14px] text-[18px] text-[#333]">Type here to search</Fit>
      </div>
      <Cell className="w-[60px]"><div className="size-[20px] rounded-full border-[2.500px] border-black" /></Cell>
      <Cell className="w-[60px]"><TaskView size={20} /></Cell>
      <Cell className="w-[66px]"><Edge size={31} /></Cell>
      <Cell className="w-[58px]"><Folder size={27} /></Cell>
      <Cell className="ml-[4px] w-[60px] border-b-[3px] border-[#c92a46] bg-[#fafafa]">
        <Svg w={32} h={32} className="mt-[2px] ml-[2px]">
          <circle cx="15" cy="15" r="14" fill="#34a853" />
          <path d="M3 8A14 14 0 0 1 28 9H15l-6 9z" fill="#ea4335" />
          <path d="M28 9a14 14 0 0 1-13 20l6-11-1-9z" fill="#fbbc04" />
          <circle cx="15" cy="15" r="6.500" fill="#fff" />
          <circle cx="15" cy="15" r="5" fill="#4285f4" />
          <circle cx="22" cy="22" r="9.500" fill="#00897b" />
          <text x="22" y="26" fontSize="11" fill="#d9efec" textAnchor="middle" fontFamily="Roboto">S</text>
        </Svg>
      </Cell>
      <Cell className="ml-[6px] w-[51px] border-b-[3px] border-[#c92a46]">
        <Svg w={28} h={23} className="mt-[2px]">
          <rect width="28" height="23" fill="#9aa0a6" />
          <rect x="1.500" y="3" width="25" height="18.500" fill="#050505" />
          <path d="M3 6h2M3 8h2M6.500 5v1M6.500 8v1M8 5l2 3M11 8h4" stroke="#ccc" />
          <path d="M2 12c8 2 16 0 24-6v-2H2z" fill="#333" opacity=".5" />
        </Svg>
      </Cell>
      <Cell className="ml-[11px] w-[51px] border-b-[3px] border-[#c92a46]">
        <Svg w={30} h={30} className="mt-[2px]">
          <rect width="30" height="30" rx="3" fill="#4a4a4a" />
          <path d="M22 5v5l-9 3 9 3v5.500L8 26v-5l9-3-9-3V9.500z" fill="#ff9800" />
        </Svg>
      </Cell>
      <div className="flex-1" />
      <Cell className="w-[30px]"><Svg w={15} h={9}><path d="M1 8l6.500-6.500L14 8" stroke="#111" strokeWidth="1.300" /></Svg></Cell>
      <Cell className="w-[29px]">
        <Svg w={14} h={20}><rect x="3" width="8" height="15" rx="2" fill="#000" /><path d="M.7 10v3.500c0 2 1 3 3 3h6.600c2 0 3-1 3-3V10M7 16.500v3M3.500 19.400h7" stroke="#000" strokeWidth="1.200" /></Svg>
      </Cell>
      <Cell className="w-[32px]"><SyncTray size={20} /></Cell>
      <Cell className="w-[29px]"><Wifi size={16} /></Cell>
      <Cell className="w-[30px]"><Battery size={20} /></Cell>
      <Cell className="w-[31px]"><Volume size={20} /></Cell>
      <Cell className="ml-[8px] text-[14.500px]"><Fit w={28}>ENG</Fit></Cell>
      <div className="ml-[17px] flex w-[74px] flex-col items-center justify-center text-[14.500px] leading-[23px]">
        <Fit w={35}>10:56</Fit>
        <Fit w={74}>15-06-2021</Fit>
      </div>
      <Cell className="ml-[19px] w-[30px]">
        <Svg w={20} h={20}><path d="M0 0h20v14H10l-4 5v-5H0z" fill="#000" /><path d="M4 4h12M4 7.500h12M4 11h7" stroke="#eee" strokeWidth="1.200" /><path d="M16 10.500a4.500 4.500 0 1 1-4.500 6.500c3 .5 5-2 4.500-6.500z" fill="#000" stroke="#eee" strokeWidth="1.200" /></Svg>
      </Cell>
      <div className="mr-[5px] ml-[20px] w-px bg-[#bbb]" />
    </div>
  );
}

export default function App() {
  return (
    <div className="flex h-[1080px] w-[1920px] flex-col overflow-hidden bg-[#202124]">
      <TabStrip />
      <AddressBar />
      <Meet />
      <Taskbar />
    </div>
  );
}
